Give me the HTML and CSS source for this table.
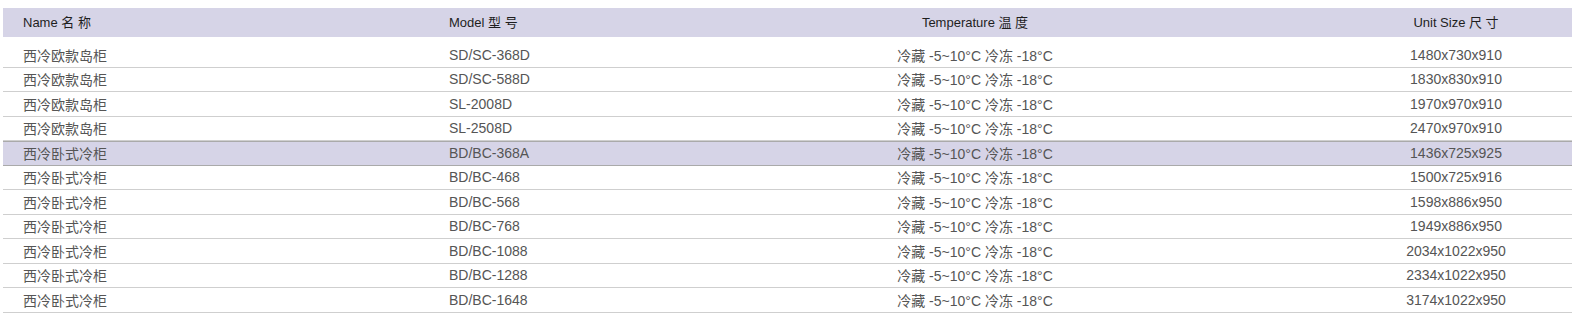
FILE: index.html
```html
<!DOCTYPE html>
<html lang="zh-CN">
<head>
  <meta charset="UTF-8">
  <title>西冷冷柜 参数</title>
  <link rel="stylesheet" href="styles.css">
</head>
<body>
  <div class="spec-table">
    <div class="row head">
      <div class="cell">Name 名 称</div>
      <div class="cell">Model 型 号</div>
      <div class="cell center">Temperature 温 度</div>
      <div class="cell center">Unit Size 尺 寸</div>
    </div>

    <div class="row">
      <div class="cell">西冷欧款岛柜</div>
      <div class="cell">SD/SC-368D</div>
      <div class="cell center">冷藏 -5~10°C 冷冻 -18°C</div>
      <div class="cell center">1480x730x910</div>
    </div>
    <div class="row">
      <div class="cell">西冷欧款岛柜</div>
      <div class="cell">SD/SC-588D</div>
      <div class="cell center">冷藏 -5~10°C 冷冻 -18°C</div>
      <div class="cell center">1830x830x910</div>
    </div>
    <div class="row">
      <div class="cell">西冷欧款岛柜</div>
      <div class="cell">SL-2008D</div>
      <div class="cell center">冷藏 -5~10°C 冷冻 -18°C</div>
      <div class="cell center">1970x970x910</div>
    </div>
    <div class="row">
      <div class="cell">西冷欧款岛柜</div>
      <div class="cell">SL-2508D</div>
      <div class="cell center">冷藏 -5~10°C 冷冻 -18°C</div>
      <div class="cell center">2470x970x910</div>
    </div>
    <div class="row active">
      <div class="cell">西冷卧式冷柜</div>
      <div class="cell">BD/BC-368A</div>
      <div class="cell center">冷藏 -5~10°C 冷冻 -18°C</div>
      <div class="cell center">1436x725x925</div>
    </div>
    <div class="row">
      <div class="cell">西冷卧式冷柜</div>
      <div class="cell">BD/BC-468</div>
      <div class="cell center">冷藏 -5~10°C 冷冻 -18°C</div>
      <div class="cell center">1500x725x916</div>
    </div>
    <div class="row">
      <div class="cell">西冷卧式冷柜</div>
      <div class="cell">BD/BC-568</div>
      <div class="cell center">冷藏 -5~10°C 冷冻 -18°C</div>
      <div class="cell center">1598x886x950</div>
    </div>
    <div class="row">
      <div class="cell">西冷卧式冷柜</div>
      <div class="cell">BD/BC-768</div>
      <div class="cell center">冷藏 -5~10°C 冷冻 -18°C</div>
      <div class="cell center">1949x886x950</div>
    </div>
    <div class="row">
      <div class="cell">西冷卧式冷柜</div>
      <div class="cell">BD/BC-1088</div>
      <div class="cell center">冷藏 -5~10°C 冷冻 -18°C</div>
      <div class="cell center">2034x1022x950</div>
    </div>
    <div class="row">
      <div class="cell">西冷卧式冷柜</div>
      <div class="cell">BD/BC-1288</div>
      <div class="cell center">冷藏 -5~10°C 冷冻 -18°C</div>
      <div class="cell center">2334x1022x950</div>
    </div>
    <div class="row">
      <div class="cell">西冷卧式冷柜</div>
      <div class="cell">BD/BC-1648</div>
      <div class="cell center">冷藏 -5~10°C 冷冻 -18°C</div>
      <div class="cell center">3174x1022x950</div>
    </div>
  </div>
</body>
</html>
```

FILE: styles.css
```css
body {
  margin: 0;
  padding: 8px 4px 0 3px;
  background: #fff;
  font-family: "Liberation Sans", Arial, "Noto Sans CJK SC", sans-serif;
}
.spec-table {
  width: 1569px;
}
.row {
  display: grid;
  grid-template-columns: 426px 181px 730px 1fr;
  align-items: center;
  height: 24.5px;
  box-sizing: border-box;
  border-bottom: 1px solid #cfcfcf;
  font-size: 14px;
  color: #555;
}
.row.head {
  height: 29px;
  margin-bottom: 6px;
  padding-bottom: 3px;
  border-bottom: none;
  background: #d6d4e7;
  font-size: 13px;
  color: #1e1e1e;
}
.row.active {
  background: #d6d4e7;
  border-top: 1px solid #aaa;
  border-bottom-color: #aaa;
}
.cell {
  padding-left: 20px;
  white-space: nowrap;
}
.cell.center {
  padding-left: 0;
  text-align: center;
}
```
